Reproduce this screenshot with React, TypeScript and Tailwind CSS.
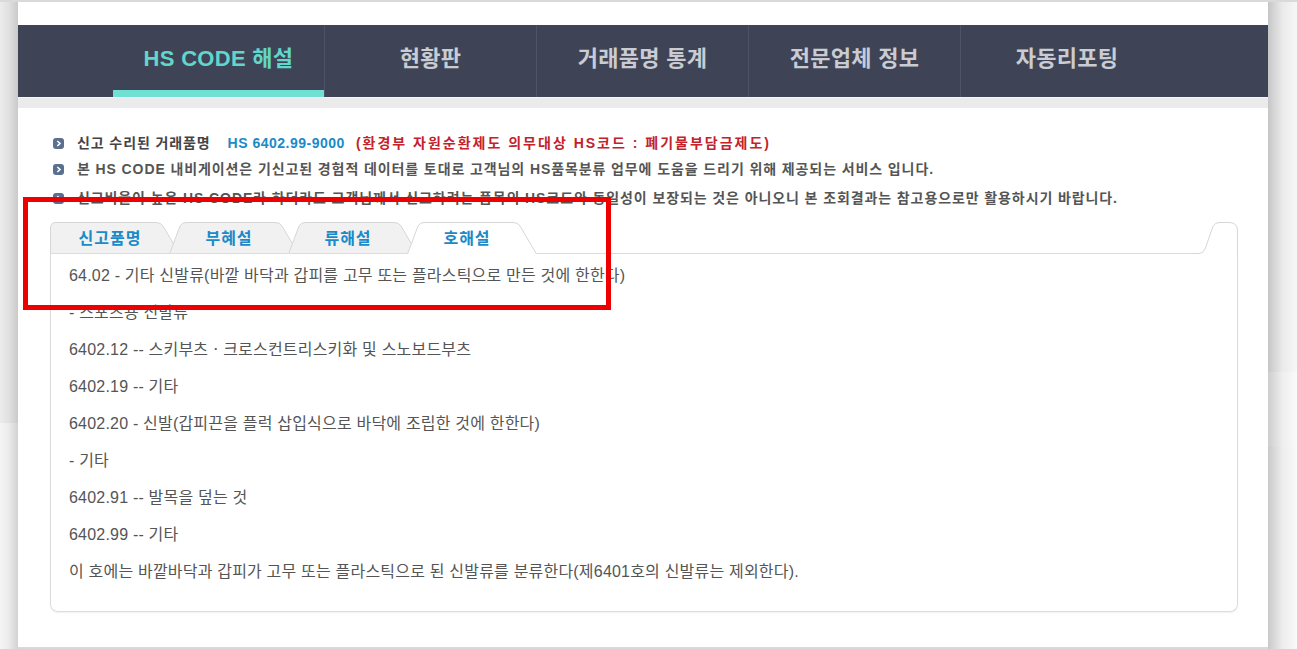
import React from 'react'

const NAV = [
  { label: 'HS CODE 해설', active: true },
  { label: '현황판', active: false },
  { label: '거래품명 통계', active: false },
  { label: '전문업체 정보', active: false },
  { label: '자동리포팅', active: false },
]

const TABS = [
  { label: '신고품명', active: false },
  { label: '부혜설', active: false },
  { label: '류해설', active: false },
  { label: '호해설', active: true },
]

const LINES = [
  '64.02 - 기타 신발류(바깥 바닥과 갑피를 고무 또는 플라스틱으로 만든 것에 한한다)',
  '- 스포츠용 신발류',
  '6402.12 -- 스키부츠ㆍ크로스컨트리스키화 및 스노보드부츠',
  '6402.19 -- 기타',
  '6402.20 - 신발(갑피끈을 플럭 삽입식으로 바닥에 조립한 것에 한한다)',
  '- 기타',
  '6402.91 -- 발목을 덮는 것',
  '6402.99 -- 기타',
  '이 호에는 바깥바닥과 갑피가 고무 또는 플라스틱으로 된 신발류를 분류한다(제6401호의 신발류는 제외한다).',
]

const FONT = { fontFamily: '"Liberation Sans", "Noto Sans CJK KR", sans-serif' }

function Bullet() {
  return (
    <svg width="11" height="11" viewBox="0 0 11 11" className="shrink-0">
      <rect x="0" y="0" width="11" height="11" rx="3" fill="#5b6f8f" />
      <path d="M4.3 3 L7 5.5 L4.3 8" stroke="#fff" strokeWidth="1.6" fill="none" />
    </svg>
  )
}

function Tab({ label, active, first }: { label: string; active: boolean; first: boolean }) {
  const d = first
    ? 'M0.5,32 L0.5,6 Q0.5,0.5 6,0.5 L106,0.5 Q111,0.5 113,4 L129.5,32'
    : 'M0.5,32 L11,4 Q13,0.5 17,0.5 L106,0.5 Q111,0.5 113,4 L129.5,32'
  return (
    <div className={`relative w-[130px] h-[32px] shrink-0 ${first ? '' : '-ml-[11px]'} ${active ? 'z-10' : ''}`}>
      <svg width="130" height="32" viewBox="0 0 130 32" className="absolute inset-0">
        <path d={d + ' Z'} fill={active ? '#ffffff' : '#f1f1f1'} />
        <path d={d} fill="none" stroke="#d6d6d6" strokeWidth="1" />
        {!active && <path d="M0,31.5 L130,31.5" stroke="#dcdcdc" strokeWidth="1" />}
      </svg>
      <div className="relative h-full flex items-center justify-center pr-[10px] pt-[1px] text-[16px] tracking-[1px] font-bold text-[#1a8bc8]">
        {label}
      </div>
    </div>
  )
}

export default function App() {
  return (
    <div className="relative w-[1297px] h-[649px] overflow-hidden bg-white" style={FONT}>
      <div className="flex h-full border-t-2 border-[#dadada]">
        {/* left gutter */}
        <div className="w-[18px] flex flex-col">
          <div className="h-[421px] bg-gradient-to-r from-[#ececec] via-[#e0e0e0] to-[#cacaca]" />
          <div className="flex-1 bg-gradient-to-r from-[#f5f5f5] via-[#ebebeb] to-[#d2d2d2]" />
        </div>

        {/* main */}
        <div className="w-[1250px] flex flex-col bg-white border-b-2 border-[#d9d9d9]">
          <div className="h-[23px]" />
          <nav className="h-[72px] bg-[#3e4456] flex pl-[95px]">
            {NAV.map((n, i) => (
              <div
                key={n.label}
                className={`relative w-[212px] flex items-center justify-center pb-[5px] text-[22px] tracking-[0.3px] font-bold ${i < 4 ? 'border-r border-[#4d5467]' : ''} ${n.active ? 'text-[#62d6cb]' : 'text-[#c9ccd2]'}`}
              >
                {n.label}
                {n.active && <div className="absolute left-0 right-0 bottom-0 h-[7px] bg-[#6ee0d4]" />}
              </div>
            ))}
          </nav>
          <div className="h-[11px] bg-[#ebebeb] border-t border-[#f6f6f6]" />

          {/* notices */}
          <div className="pl-[35px] pt-[22px] flex flex-col text-[14px] tracking-[0.9px] font-bold text-[#555]">
            <div className="h-[26px] flex items-center gap-[13px]">
              <Bullet />
              <span className="text-[#444]">신고 수리된 거래품명</span>
              <span className="text-[#1a8bc8] ml-[4px] tracking-[0.5px]">HS 6402.99-9000</span>
              <span className="text-[#c4222a] -ml-[2px] tracking-[2px]">(환경부 자원순환제도 의무대상 HS코드 : 폐기물부담금제도)</span>
            </div>
            <div className="h-[26px] flex items-center gap-[13px]">
              <Bullet />
              <span>본 HS CODE 내비게이션은 기신고된 경험적 데이터를 토대로 고객님의 HS품목분류 업무에 도움을 드리기 위해 제공되는 서비스 입니다.</span>
            </div>
            <div className="h-[29px] flex items-center gap-[13px] pt-[3px]">
              <Bullet />
              <span>신고비율이 높은 HS CODE라 하더라도 고객님께서 신고하려는 품목의 HS코드와 동일성이 보장되는 것은 아니오니 본 조회결과는 참고용으로만 활용하시기 바랍니다.</span>
            </div>
          </div>

          {/* tabs panel */}
          <div className="ml-[32px] mr-[30px] mt-[11px] flex flex-col">
            <div className="flex items-end h-[32px]">
              {TABS.map((t, i) => (
                <Tab key={t.label} label={t.label} active={t.active} first={i === 0} />
              ))}
              <div className="flex-1 h-px bg-[#dcdcdc]" />
              <svg width="45" height="32" viewBox="0 0 45 32" className="shrink-0">
                <path
                  d="M0,31.5 L6,31.5 Q10,31.5 12,27 L20,4.5 Q22,0.5 26,0.5 L36,0.5 Q44.5,0.5 44.5,9 L44.5,32"
                  fill="none"
                  stroke="#d6d6d6"
                  strokeWidth="1"
                />
              </svg>
            </div>
            <div className="border-x border-b border-[#dcdcdc] rounded-b-[8px] shadow-[0_1px_2px_rgba(0,0,0,0.06)] pl-[18px] pt-[3px] pb-[21px] text-[16px] tracking-[0.2px] text-[#555]">
              {LINES.map((l) => (
                <div key={l} className="h-[37px] flex items-center">
                  {l}
                </div>
              ))}
            </div>
          </div>
        </div>

        {/* right gutter */}
        <div className="flex-1 flex flex-col">
          <div className="h-[370px] bg-gradient-to-r from-[#c6c6c6] via-[#eaeaea] to-[#f7f7f7]" />
          <div className="h-[75px] bg-gradient-to-r from-[#cdcdcd] via-[#eeeeee] to-[#fafafa]" />
          <div className="flex-1 bg-gradient-to-r from-[#c9c9c9] via-[#ededed] to-[#f9f9f9]" />
        </div>
      </div>

      {/* red highlight annotation */}
      <div className="absolute left-[23px] top-[197px] w-[588px] h-[113px] border-[5px] border-[#ee0000]" />
    </div>
  )
}
